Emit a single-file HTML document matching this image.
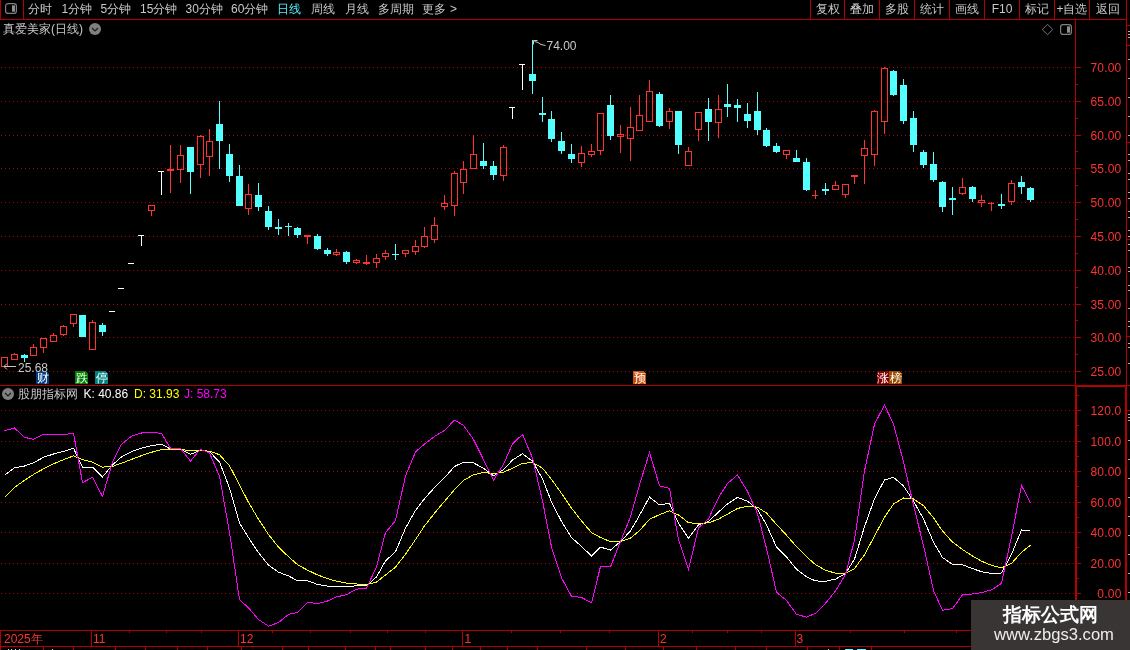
<!DOCTYPE html>
<html><head><meta charset="utf-8"><title>chart</title>
<style>
html,body{margin:0;padding:0;background:#000;overflow:hidden;}
body{width:1130px;height:650px;overflow:hidden;position:relative;font-family:"Liberation Sans",sans-serif;}
svg{position:absolute;left:0;top:0;}
#txt{position:absolute;left:0;top:0;width:1130px;height:650px;will-change:transform;transform:translateZ(0);}
.t{position:absolute;white-space:nowrap;font-family:"Liberation Sans",sans-serif;}
</style></head><body>
<svg width="1130" height="650" viewBox="0 0 1130 650" shape-rendering="crispEdges">
<defs><pattern id="dot" x="1" y="0" width="4" height="1" patternUnits="userSpaceOnUse"><rect x="0" y="0" width="1" height="1" fill="#B40000"/></pattern></defs>
<rect x="0" y="19" width="1127" height="1" fill="#B40000"/>
<rect x="0" y="0" width="1" height="20" fill="#B40000"/>
<rect x="23" y="0" width="1" height="20" fill="#B40000"/>
<rect x="810" y="0" width="1" height="20" fill="#B40000"/>
<rect x="844" y="0" width="1" height="20" fill="#B40000"/>
<rect x="879" y="0" width="1" height="20" fill="#B40000"/>
<rect x="914" y="0" width="1" height="20" fill="#B40000"/>
<rect x="949" y="0" width="1" height="20" fill="#B40000"/>
<rect x="984" y="0" width="1" height="20" fill="#B40000"/>
<rect x="1019" y="0" width="1" height="20" fill="#B40000"/>
<rect x="1054" y="0" width="1" height="20" fill="#B40000"/>
<rect x="1089" y="0" width="1" height="20" fill="#B40000"/>
<rect x="1126" y="0" width="1" height="386" fill="#B40000"/>
<rect x="1075" y="20" width="1" height="366" fill="#B40000"/>
<rect x="0" y="385" width="1127" height="1" fill="#B40000"/>
<rect x="1075" y="385" width="2" height="246" fill="#B40000"/>
<rect x="1125" y="385" width="2" height="246" fill="#B40000"/>
<rect x="1075" y="385" width="52" height="2" fill="#B40000"/>
<rect x="0" y="630" width="1127" height="1" fill="#B40000"/>
<rect x="0" y="646" width="1131" height="1" fill="#B40000"/>
<rect x="1127" y="25" width="3" height="1" fill="#B40000"/>
<rect x="1127" y="45" width="3" height="1" fill="#B40000"/>
<rect x="1127" y="142" width="3" height="1" fill="#B40000"/>
<rect x="1127" y="239" width="3" height="1" fill="#B40000"/>
<rect x="1127" y="336" width="3" height="1" fill="#B40000"/>
<rect x="1127" y="385" width="3" height="1" fill="#B40000"/>
<rect x="1127" y="410" width="3" height="1" fill="#B40000"/>
<rect x="0" y="67" width="1075" height="1" fill="url(#dot)"/>
<rect x="1076" y="67" width="5" height="1" fill="#B40000"/>
<rect x="0" y="101" width="1075" height="1" fill="url(#dot)"/>
<rect x="1076" y="101" width="5" height="1" fill="#B40000"/>
<rect x="0" y="135" width="1075" height="1" fill="url(#dot)"/>
<rect x="1076" y="135" width="5" height="1" fill="#B40000"/>
<rect x="0" y="168" width="1075" height="1" fill="url(#dot)"/>
<rect x="1076" y="168" width="5" height="1" fill="#B40000"/>
<rect x="0" y="202" width="1075" height="1" fill="url(#dot)"/>
<rect x="1076" y="202" width="5" height="1" fill="#B40000"/>
<rect x="0" y="236" width="1075" height="1" fill="url(#dot)"/>
<rect x="1076" y="236" width="5" height="1" fill="#B40000"/>
<rect x="0" y="270" width="1075" height="1" fill="url(#dot)"/>
<rect x="1076" y="270" width="5" height="1" fill="#B40000"/>
<rect x="0" y="304" width="1075" height="1" fill="url(#dot)"/>
<rect x="1076" y="304" width="5" height="1" fill="#B40000"/>
<rect x="0" y="337" width="1075" height="1" fill="url(#dot)"/>
<rect x="1076" y="337" width="5" height="1" fill="#B40000"/>
<rect x="0" y="371" width="1075" height="1" fill="url(#dot)"/>
<rect x="1076" y="371" width="5" height="1" fill="#B40000"/>
<rect x="1076" y="84" width="2" height="1" fill="#B40000"/>
<rect x="1076" y="118" width="2" height="1" fill="#B40000"/>
<rect x="1076" y="151" width="2" height="1" fill="#B40000"/>
<rect x="1076" y="185" width="2" height="1" fill="#B40000"/>
<rect x="1076" y="219" width="2" height="1" fill="#B40000"/>
<rect x="1076" y="253" width="2" height="1" fill="#B40000"/>
<rect x="1076" y="287" width="2" height="1" fill="#B40000"/>
<rect x="1076" y="320" width="2" height="1" fill="#B40000"/>
<rect x="1076" y="354" width="2" height="1" fill="#B40000"/>
<rect x="0" y="410" width="1075" height="1" fill="url(#dot)"/>
<rect x="1077" y="410" width="4" height="1" fill="#B40000"/>
<rect x="0" y="441" width="1075" height="1" fill="url(#dot)"/>
<rect x="1077" y="441" width="4" height="1" fill="#B40000"/>
<rect x="0" y="471" width="1075" height="1" fill="url(#dot)"/>
<rect x="1077" y="471" width="4" height="1" fill="#B40000"/>
<rect x="0" y="502" width="1075" height="1" fill="url(#dot)"/>
<rect x="1077" y="502" width="4" height="1" fill="#B40000"/>
<rect x="0" y="532" width="1075" height="1" fill="url(#dot)"/>
<rect x="1077" y="532" width="4" height="1" fill="#B40000"/>
<rect x="0" y="563" width="1075" height="1" fill="url(#dot)"/>
<rect x="1077" y="563" width="4" height="1" fill="#B40000"/>
<rect x="0" y="593" width="1075" height="1" fill="url(#dot)"/>
<rect x="1077" y="593" width="4" height="1" fill="#B40000"/>
<rect x="1077" y="425" width="2" height="1" fill="#B40000"/>
<rect x="1077" y="456" width="2" height="1" fill="#B40000"/>
<rect x="1077" y="486" width="2" height="1" fill="#B40000"/>
<rect x="1077" y="517" width="2" height="1" fill="#B40000"/>
<rect x="1077" y="547" width="2" height="1" fill="#B40000"/>
<rect x="1077" y="578" width="2" height="1" fill="#B40000"/>
<rect x="1077" y="395" width="2" height="1" fill="#B40000"/>
<rect x="1077" y="608" width="2" height="1" fill="#B40000"/>
<rect x="1077" y="624" width="2" height="1" fill="#B40000"/>
<rect x="91" y="630" width="1" height="17" fill="#B40000"/>
<rect x="238" y="630" width="1" height="17" fill="#B40000"/>
<rect x="462" y="630" width="1" height="17" fill="#B40000"/>
<rect x="658" y="630" width="1" height="17" fill="#B40000"/>
<rect x="795" y="630" width="1" height="17" fill="#B40000"/>
<rect x="129" y="630" width="1" height="3" fill="#B40000"/>
<rect x="166" y="630" width="1" height="3" fill="#B40000"/>
<rect x="201" y="630" width="1" height="3" fill="#B40000"/>
<rect x="272" y="630" width="1" height="3" fill="#B40000"/>
<rect x="310" y="630" width="1" height="3" fill="#B40000"/>
<rect x="350" y="630" width="1" height="3" fill="#B40000"/>
<rect x="387" y="630" width="1" height="3" fill="#B40000"/>
<rect x="425" y="630" width="1" height="3" fill="#B40000"/>
<rect x="511" y="630" width="1" height="3" fill="#B40000"/>
<rect x="560" y="630" width="1" height="3" fill="#B40000"/>
<rect x="609" y="630" width="1" height="3" fill="#B40000"/>
<rect x="692" y="630" width="1" height="3" fill="#B40000"/>
<rect x="727" y="630" width="1" height="3" fill="#B40000"/>
<rect x="761" y="630" width="1" height="3" fill="#B40000"/>
<rect x="850" y="630" width="1" height="3" fill="#B40000"/>
<rect x="904" y="630" width="1" height="3" fill="#B40000"/>
<rect x="956" y="630" width="1" height="3" fill="#B40000"/>
<rect x="43" y="646" width="1" height="4" fill="#B40000"/>
<rect x="73" y="646" width="1" height="4" fill="#B40000"/>
<rect x="115" y="646" width="1" height="4" fill="#B40000"/>
<rect x="145" y="646" width="1" height="4" fill="#B40000"/>
<rect x="177" y="646" width="1" height="4" fill="#B40000"/>
<rect x="207" y="646" width="1" height="4" fill="#B40000"/>
<rect x="241" y="646" width="1" height="4" fill="#B40000"/>
<rect x="282" y="646" width="1" height="4" fill="#B40000"/>
<rect x="308" y="646" width="1" height="4" fill="#B40000"/>
<rect x="345" y="646" width="1" height="4" fill="#B40000"/>
<rect x="375" y="646" width="1" height="4" fill="#B40000"/>
<rect x="390" y="646" width="1" height="4" fill="#B40000"/>
<rect x="425" y="646" width="1" height="4" fill="#B40000"/>
<rect x="452" y="646" width="1" height="4" fill="#B40000"/>
<rect x="480" y="646" width="1" height="4" fill="#B40000"/>
<rect x="507" y="646" width="1" height="4" fill="#B40000"/>
<rect x="537" y="646" width="1" height="4" fill="#B40000"/>
<rect x="586" y="646" width="1" height="4" fill="#B40000"/>
<rect x="625" y="646" width="1" height="4" fill="#B40000"/>
<rect x="663" y="646" width="1" height="4" fill="#B40000"/>
<rect x="696" y="646" width="1" height="4" fill="#B40000"/>
<rect x="735" y="646" width="1" height="4" fill="#B40000"/>
<rect x="766" y="646" width="1" height="4" fill="#B40000"/>
<rect x="807" y="646" width="1" height="4" fill="#B40000"/>
<rect x="839" y="646" width="1" height="4" fill="#B40000"/>
<rect x="871" y="646" width="1" height="4" fill="#B40000"/>
<rect x="0" y="630" width="1" height="20" fill="#B40000"/>
<rect x="8" y="649" width="1" height="1" fill="#D0D0D0"/>
<rect x="11" y="649" width="1" height="1" fill="#D0D0D0"/>
<rect x="15" y="649" width="1" height="1" fill="#D0D0D0"/>
<rect x="19" y="649" width="1" height="1" fill="#D0D0D0"/>
<rect x="52" y="649" width="1" height="1" fill="#D0D0D0"/>
<rect x="828" y="649" width="1" height="1" fill="#D0D0D0"/>
<rect x="845" y="649" width="8" height="1" fill="#54FFFF"/>
<rect x="857" y="649" width="9" height="1" fill="#54FFFF"/>
<rect x="1" y="357" width="7" height="1" fill="#FF3232"/>
<rect x="1" y="366" width="7" height="1" fill="#FF3232"/>
<rect x="1" y="357" width="1" height="10" fill="#FF3232"/>
<rect x="7" y="357" width="1" height="10" fill="#FF3232"/>
<rect x="14" y="353" width="1" height="1" fill="#FF3232"/>
<rect x="11" y="354" width="7" height="1" fill="#FF3232"/>
<rect x="11" y="359" width="7" height="1" fill="#FF3232"/>
<rect x="11" y="354" width="1" height="6" fill="#FF3232"/>
<rect x="17" y="354" width="1" height="6" fill="#FF3232"/>
<rect x="24" y="354" width="1" height="8" fill="#54FFFF"/>
<rect x="21" y="355" width="7" height="3" fill="#54FFFF"/>
<rect x="33" y="344" width="1" height="3" fill="#FF3232"/>
<rect x="30" y="347" width="7" height="1" fill="#FF3232"/>
<rect x="30" y="355" width="7" height="1" fill="#FF3232"/>
<rect x="30" y="347" width="1" height="9" fill="#FF3232"/>
<rect x="36" y="347" width="1" height="9" fill="#FF3232"/>
<rect x="43" y="348" width="1" height="5" fill="#FF3232"/>
<rect x="40" y="338" width="7" height="1" fill="#FF3232"/>
<rect x="40" y="347" width="7" height="1" fill="#FF3232"/>
<rect x="40" y="338" width="1" height="10" fill="#FF3232"/>
<rect x="46" y="338" width="1" height="10" fill="#FF3232"/>
<rect x="53" y="333" width="1" height="2" fill="#FF3232"/>
<rect x="50" y="335" width="7" height="1" fill="#FF3232"/>
<rect x="50" y="341" width="7" height="1" fill="#FF3232"/>
<rect x="50" y="335" width="1" height="7" fill="#FF3232"/>
<rect x="56" y="335" width="1" height="7" fill="#FF3232"/>
<rect x="63" y="325" width="1" height="1" fill="#FF3232"/>
<rect x="63" y="335" width="1" height="1" fill="#FF3232"/>
<rect x="60" y="326" width="7" height="1" fill="#FF3232"/>
<rect x="60" y="334" width="7" height="1" fill="#FF3232"/>
<rect x="60" y="326" width="1" height="9" fill="#FF3232"/>
<rect x="66" y="326" width="1" height="9" fill="#FF3232"/>
<rect x="73" y="324" width="1" height="3" fill="#FF3232"/>
<rect x="70" y="314" width="7" height="1" fill="#FF3232"/>
<rect x="70" y="323" width="7" height="1" fill="#FF3232"/>
<rect x="70" y="314" width="1" height="10" fill="#FF3232"/>
<rect x="76" y="314" width="1" height="10" fill="#FF3232"/>
<rect x="82" y="315" width="1" height="22" fill="#54FFFF"/>
<rect x="79" y="315" width="7" height="22" fill="#54FFFF"/>
<rect x="92" y="320" width="1" height="2" fill="#FF3232"/>
<rect x="89" y="322" width="7" height="1" fill="#FF3232"/>
<rect x="89" y="349" width="7" height="1" fill="#FF3232"/>
<rect x="89" y="322" width="1" height="28" fill="#FF3232"/>
<rect x="95" y="322" width="1" height="28" fill="#FF3232"/>
<rect x="102" y="323" width="1" height="13" fill="#54FFFF"/>
<rect x="99" y="325" width="7" height="7" fill="#54FFFF"/>
<rect x="109" y="311" width="6" height="1" fill="#FFFFFF"/>
<rect x="118" y="288" width="6" height="1" fill="#FFFFFF"/>
<rect x="128" y="263" width="6" height="1" fill="#FFFFFF"/>
<rect x="138" y="235" width="6" height="1" fill="#FFFFFF"/>
<rect x="141" y="235" width="1" height="11" fill="#FFFFFF"/>
<rect x="151" y="211" width="1" height="5" fill="#FF3232"/>
<rect x="148" y="205" width="7" height="1" fill="#FF3232"/>
<rect x="148" y="210" width="7" height="1" fill="#FF3232"/>
<rect x="148" y="205" width="1" height="6" fill="#FF3232"/>
<rect x="154" y="205" width="1" height="6" fill="#FF3232"/>
<rect x="158" y="171" width="6" height="1" fill="#FFFFFF"/>
<rect x="161" y="171" width="1" height="24" fill="#FFFFFF"/>
<rect x="170" y="145" width="1" height="24" fill="#FF3232"/>
<rect x="170" y="171" width="1" height="22" fill="#FF3232"/>
<rect x="167" y="169" width="7" height="2" fill="#FF3232"/>
<rect x="180" y="145" width="1" height="10" fill="#FF3232"/>
<rect x="180" y="170" width="1" height="13" fill="#FF3232"/>
<rect x="177" y="155" width="7" height="1" fill="#FF3232"/>
<rect x="177" y="169" width="7" height="1" fill="#FF3232"/>
<rect x="177" y="155" width="1" height="15" fill="#FF3232"/>
<rect x="183" y="155" width="1" height="15" fill="#FF3232"/>
<rect x="190" y="147" width="1" height="47" fill="#54FFFF"/>
<rect x="187" y="147" width="7" height="25" fill="#54FFFF"/>
<rect x="200" y="135" width="1" height="1" fill="#FF3232"/>
<rect x="200" y="165" width="1" height="13" fill="#FF3232"/>
<rect x="197" y="136" width="7" height="1" fill="#FF3232"/>
<rect x="197" y="164" width="7" height="1" fill="#FF3232"/>
<rect x="197" y="136" width="1" height="29" fill="#FF3232"/>
<rect x="203" y="136" width="1" height="29" fill="#FF3232"/>
<rect x="209" y="129" width="1" height="12" fill="#FF3232"/>
<rect x="209" y="157" width="1" height="19" fill="#FF3232"/>
<rect x="206" y="141" width="7" height="1" fill="#FF3232"/>
<rect x="206" y="156" width="7" height="1" fill="#FF3232"/>
<rect x="206" y="141" width="1" height="16" fill="#FF3232"/>
<rect x="212" y="141" width="1" height="16" fill="#FF3232"/>
<rect x="219" y="101" width="1" height="68" fill="#54FFFF"/>
<rect x="216" y="124" width="7" height="17" fill="#54FFFF"/>
<rect x="229" y="144" width="1" height="38" fill="#54FFFF"/>
<rect x="226" y="154" width="7" height="22" fill="#54FFFF"/>
<rect x="239" y="165" width="1" height="41" fill="#54FFFF"/>
<rect x="236" y="176" width="7" height="30" fill="#54FFFF"/>
<rect x="248" y="184" width="1" height="10" fill="#FF3232"/>
<rect x="248" y="209" width="1" height="6" fill="#FF3232"/>
<rect x="245" y="194" width="7" height="1" fill="#FF3232"/>
<rect x="245" y="208" width="7" height="1" fill="#FF3232"/>
<rect x="245" y="194" width="1" height="15" fill="#FF3232"/>
<rect x="251" y="194" width="1" height="15" fill="#FF3232"/>
<rect x="258" y="183" width="1" height="28" fill="#54FFFF"/>
<rect x="255" y="195" width="7" height="12" fill="#54FFFF"/>
<rect x="268" y="206" width="1" height="24" fill="#54FFFF"/>
<rect x="265" y="211" width="7" height="16" fill="#54FFFF"/>
<rect x="278" y="219" width="1" height="16" fill="#54FFFF"/>
<rect x="275" y="227" width="7" height="2" fill="#54FFFF"/>
<rect x="288" y="223" width="1" height="13" fill="#54FFFF"/>
<rect x="285" y="226" width="7" height="1" fill="#54FFFF"/>
<rect x="297" y="227" width="1" height="11" fill="#54FFFF"/>
<rect x="294" y="228" width="7" height="7" fill="#54FFFF"/>
<rect x="307" y="237" width="1" height="7" fill="#FF3232"/>
<rect x="304" y="235" width="7" height="2" fill="#FF3232"/>
<rect x="317" y="234" width="1" height="16" fill="#54FFFF"/>
<rect x="314" y="236" width="7" height="13" fill="#54FFFF"/>
<rect x="327" y="248" width="1" height="8" fill="#54FFFF"/>
<rect x="324" y="250" width="7" height="4" fill="#54FFFF"/>
<rect x="336" y="249" width="1" height="3" fill="#FF3232"/>
<rect x="336" y="255" width="1" height="1" fill="#FF3232"/>
<rect x="333" y="252" width="7" height="1" fill="#FF3232"/>
<rect x="333" y="254" width="7" height="1" fill="#FF3232"/>
<rect x="333" y="252" width="1" height="3" fill="#FF3232"/>
<rect x="339" y="252" width="1" height="3" fill="#FF3232"/>
<rect x="346" y="251" width="1" height="13" fill="#54FFFF"/>
<rect x="343" y="252" width="7" height="10" fill="#54FFFF"/>
<rect x="356" y="259" width="1" height="1" fill="#FF3232"/>
<rect x="356" y="263" width="1" height="1" fill="#FF3232"/>
<rect x="353" y="260" width="7" height="1" fill="#FF3232"/>
<rect x="353" y="262" width="7" height="1" fill="#FF3232"/>
<rect x="353" y="260" width="1" height="3" fill="#FF3232"/>
<rect x="359" y="260" width="1" height="3" fill="#FF3232"/>
<rect x="366" y="255" width="1" height="7" fill="#FF3232"/>
<rect x="366" y="264" width="1" height="1" fill="#FF3232"/>
<rect x="363" y="262" width="7" height="2" fill="#FF3232"/>
<rect x="376" y="254" width="1" height="4" fill="#FF3232"/>
<rect x="376" y="263" width="1" height="5" fill="#FF3232"/>
<rect x="373" y="258" width="7" height="1" fill="#FF3232"/>
<rect x="373" y="262" width="7" height="1" fill="#FF3232"/>
<rect x="373" y="258" width="1" height="5" fill="#FF3232"/>
<rect x="379" y="258" width="1" height="5" fill="#FF3232"/>
<rect x="385" y="250" width="1" height="3" fill="#FF3232"/>
<rect x="385" y="257" width="1" height="3" fill="#FF3232"/>
<rect x="382" y="253" width="7" height="1" fill="#FF3232"/>
<rect x="382" y="256" width="7" height="1" fill="#FF3232"/>
<rect x="382" y="253" width="1" height="4" fill="#FF3232"/>
<rect x="388" y="253" width="1" height="4" fill="#FF3232"/>
<rect x="395" y="244" width="1" height="16" fill="#54FFFF"/>
<rect x="392" y="254" width="7" height="1" fill="#54FFFF"/>
<rect x="405" y="254" width="1" height="3" fill="#FF3232"/>
<rect x="402" y="250" width="7" height="1" fill="#FF3232"/>
<rect x="402" y="253" width="7" height="1" fill="#FF3232"/>
<rect x="402" y="250" width="1" height="4" fill="#FF3232"/>
<rect x="408" y="250" width="1" height="4" fill="#FF3232"/>
<rect x="415" y="240" width="1" height="6" fill="#FF3232"/>
<rect x="415" y="252" width="1" height="3" fill="#FF3232"/>
<rect x="412" y="246" width="7" height="1" fill="#FF3232"/>
<rect x="412" y="251" width="7" height="1" fill="#FF3232"/>
<rect x="412" y="246" width="1" height="6" fill="#FF3232"/>
<rect x="418" y="246" width="1" height="6" fill="#FF3232"/>
<rect x="424" y="227" width="1" height="9" fill="#FF3232"/>
<rect x="424" y="247" width="1" height="1" fill="#FF3232"/>
<rect x="421" y="236" width="7" height="1" fill="#FF3232"/>
<rect x="421" y="246" width="7" height="1" fill="#FF3232"/>
<rect x="421" y="236" width="1" height="11" fill="#FF3232"/>
<rect x="427" y="236" width="1" height="11" fill="#FF3232"/>
<rect x="434" y="217" width="1" height="8" fill="#FF3232"/>
<rect x="434" y="240" width="1" height="3" fill="#FF3232"/>
<rect x="431" y="225" width="7" height="1" fill="#FF3232"/>
<rect x="431" y="239" width="7" height="1" fill="#FF3232"/>
<rect x="431" y="225" width="1" height="15" fill="#FF3232"/>
<rect x="437" y="225" width="1" height="15" fill="#FF3232"/>
<rect x="444" y="195" width="1" height="8" fill="#FF3232"/>
<rect x="444" y="207" width="1" height="3" fill="#FF3232"/>
<rect x="441" y="203" width="7" height="1" fill="#FF3232"/>
<rect x="441" y="206" width="7" height="1" fill="#FF3232"/>
<rect x="441" y="203" width="1" height="4" fill="#FF3232"/>
<rect x="447" y="203" width="1" height="4" fill="#FF3232"/>
<rect x="454" y="171" width="1" height="2" fill="#FF3232"/>
<rect x="454" y="206" width="1" height="10" fill="#FF3232"/>
<rect x="451" y="173" width="7" height="1" fill="#FF3232"/>
<rect x="451" y="205" width="7" height="1" fill="#FF3232"/>
<rect x="451" y="173" width="1" height="33" fill="#FF3232"/>
<rect x="457" y="173" width="1" height="33" fill="#FF3232"/>
<rect x="463" y="161" width="1" height="8" fill="#FF3232"/>
<rect x="463" y="183" width="1" height="11" fill="#FF3232"/>
<rect x="460" y="169" width="7" height="1" fill="#FF3232"/>
<rect x="460" y="182" width="7" height="1" fill="#FF3232"/>
<rect x="460" y="169" width="1" height="14" fill="#FF3232"/>
<rect x="466" y="169" width="1" height="14" fill="#FF3232"/>
<rect x="473" y="135" width="1" height="19" fill="#FF3232"/>
<rect x="470" y="154" width="7" height="1" fill="#FF3232"/>
<rect x="470" y="168" width="7" height="1" fill="#FF3232"/>
<rect x="470" y="154" width="1" height="15" fill="#FF3232"/>
<rect x="476" y="154" width="1" height="15" fill="#FF3232"/>
<rect x="483" y="143" width="1" height="26" fill="#54FFFF"/>
<rect x="480" y="161" width="7" height="5" fill="#54FFFF"/>
<rect x="493" y="161" width="1" height="19" fill="#54FFFF"/>
<rect x="490" y="166" width="7" height="9" fill="#54FFFF"/>
<rect x="503" y="145" width="1" height="2" fill="#FF3232"/>
<rect x="503" y="176" width="1" height="5" fill="#FF3232"/>
<rect x="500" y="147" width="7" height="1" fill="#FF3232"/>
<rect x="500" y="175" width="7" height="1" fill="#FF3232"/>
<rect x="500" y="147" width="1" height="29" fill="#FF3232"/>
<rect x="506" y="147" width="1" height="29" fill="#FF3232"/>
<rect x="509" y="107" width="6" height="1" fill="#FFFFFF"/>
<rect x="512" y="107" width="1" height="12" fill="#FFFFFF"/>
<rect x="519" y="64" width="6" height="1" fill="#FFFFFF"/>
<rect x="522" y="64" width="1" height="26" fill="#FFFFFF"/>
<rect x="532" y="40" width="1" height="54" fill="#54FFFF"/>
<rect x="529" y="74" width="7" height="7" fill="#54FFFF"/>
<rect x="542" y="97" width="1" height="25" fill="#54FFFF"/>
<rect x="539" y="113" width="7" height="2" fill="#54FFFF"/>
<rect x="551" y="111" width="1" height="31" fill="#54FFFF"/>
<rect x="548" y="119" width="7" height="20" fill="#54FFFF"/>
<rect x="561" y="132" width="1" height="22" fill="#54FFFF"/>
<rect x="558" y="141" width="7" height="10" fill="#54FFFF"/>
<rect x="571" y="144" width="1" height="19" fill="#54FFFF"/>
<rect x="568" y="154" width="7" height="5" fill="#54FFFF"/>
<rect x="581" y="146" width="1" height="7" fill="#FF3232"/>
<rect x="581" y="163" width="1" height="4" fill="#FF3232"/>
<rect x="578" y="153" width="7" height="1" fill="#FF3232"/>
<rect x="578" y="162" width="7" height="1" fill="#FF3232"/>
<rect x="578" y="153" width="1" height="10" fill="#FF3232"/>
<rect x="584" y="153" width="1" height="10" fill="#FF3232"/>
<rect x="591" y="144" width="1" height="7" fill="#FF3232"/>
<rect x="591" y="155" width="1" height="2" fill="#FF3232"/>
<rect x="588" y="151" width="7" height="1" fill="#FF3232"/>
<rect x="588" y="154" width="7" height="1" fill="#FF3232"/>
<rect x="588" y="151" width="1" height="4" fill="#FF3232"/>
<rect x="594" y="151" width="1" height="4" fill="#FF3232"/>
<rect x="600" y="151" width="1" height="4" fill="#FF3232"/>
<rect x="597" y="113" width="7" height="1" fill="#FF3232"/>
<rect x="597" y="150" width="7" height="1" fill="#FF3232"/>
<rect x="597" y="113" width="1" height="38" fill="#FF3232"/>
<rect x="603" y="113" width="1" height="38" fill="#FF3232"/>
<rect x="610" y="95" width="1" height="45" fill="#54FFFF"/>
<rect x="607" y="105" width="7" height="31" fill="#54FFFF"/>
<rect x="620" y="125" width="1" height="9" fill="#FF3232"/>
<rect x="620" y="137" width="1" height="16" fill="#FF3232"/>
<rect x="617" y="134" width="7" height="1" fill="#FF3232"/>
<rect x="617" y="136" width="7" height="1" fill="#FF3232"/>
<rect x="617" y="134" width="1" height="3" fill="#FF3232"/>
<rect x="623" y="134" width="1" height="3" fill="#FF3232"/>
<rect x="630" y="107" width="1" height="20" fill="#FF3232"/>
<rect x="630" y="139" width="1" height="22" fill="#FF3232"/>
<rect x="627" y="127" width="7" height="1" fill="#FF3232"/>
<rect x="627" y="138" width="7" height="1" fill="#FF3232"/>
<rect x="627" y="127" width="1" height="12" fill="#FF3232"/>
<rect x="633" y="127" width="1" height="12" fill="#FF3232"/>
<rect x="639" y="95" width="1" height="20" fill="#FF3232"/>
<rect x="636" y="115" width="7" height="1" fill="#FF3232"/>
<rect x="636" y="130" width="7" height="1" fill="#FF3232"/>
<rect x="636" y="115" width="1" height="16" fill="#FF3232"/>
<rect x="642" y="115" width="1" height="16" fill="#FF3232"/>
<rect x="649" y="80" width="1" height="11" fill="#FF3232"/>
<rect x="646" y="91" width="7" height="1" fill="#FF3232"/>
<rect x="646" y="121" width="7" height="1" fill="#FF3232"/>
<rect x="646" y="91" width="1" height="31" fill="#FF3232"/>
<rect x="652" y="91" width="1" height="31" fill="#FF3232"/>
<rect x="659" y="92" width="1" height="35" fill="#54FFFF"/>
<rect x="656" y="94" width="7" height="32" fill="#54FFFF"/>
<rect x="669" y="108" width="1" height="3" fill="#FF3232"/>
<rect x="669" y="122" width="1" height="7" fill="#FF3232"/>
<rect x="666" y="111" width="7" height="1" fill="#FF3232"/>
<rect x="666" y="121" width="7" height="1" fill="#FF3232"/>
<rect x="666" y="111" width="1" height="11" fill="#FF3232"/>
<rect x="672" y="111" width="1" height="11" fill="#FF3232"/>
<rect x="678" y="111" width="1" height="43" fill="#54FFFF"/>
<rect x="675" y="111" width="7" height="34" fill="#54FFFF"/>
<rect x="688" y="147" width="1" height="4" fill="#FF3232"/>
<rect x="685" y="151" width="7" height="1" fill="#FF3232"/>
<rect x="685" y="165" width="7" height="1" fill="#FF3232"/>
<rect x="685" y="151" width="1" height="15" fill="#FF3232"/>
<rect x="691" y="151" width="1" height="15" fill="#FF3232"/>
<rect x="698" y="130" width="1" height="11" fill="#FF3232"/>
<rect x="695" y="112" width="7" height="1" fill="#FF3232"/>
<rect x="695" y="129" width="7" height="1" fill="#FF3232"/>
<rect x="695" y="112" width="1" height="18" fill="#FF3232"/>
<rect x="701" y="112" width="1" height="18" fill="#FF3232"/>
<rect x="708" y="98" width="1" height="43" fill="#54FFFF"/>
<rect x="705" y="109" width="7" height="13" fill="#54FFFF"/>
<rect x="718" y="95" width="1" height="14" fill="#FF3232"/>
<rect x="718" y="123" width="1" height="15" fill="#FF3232"/>
<rect x="715" y="109" width="7" height="1" fill="#FF3232"/>
<rect x="715" y="122" width="7" height="1" fill="#FF3232"/>
<rect x="715" y="109" width="1" height="14" fill="#FF3232"/>
<rect x="721" y="109" width="1" height="14" fill="#FF3232"/>
<rect x="727" y="84" width="1" height="33" fill="#54FFFF"/>
<rect x="724" y="104" width="7" height="3" fill="#54FFFF"/>
<rect x="737" y="99" width="1" height="23" fill="#54FFFF"/>
<rect x="734" y="105" width="7" height="3" fill="#54FFFF"/>
<rect x="747" y="103" width="1" height="25" fill="#54FFFF"/>
<rect x="744" y="114" width="7" height="7" fill="#54FFFF"/>
<rect x="757" y="92" width="1" height="43" fill="#54FFFF"/>
<rect x="754" y="111" width="7" height="19" fill="#54FFFF"/>
<rect x="766" y="128" width="1" height="19" fill="#54FFFF"/>
<rect x="763" y="130" width="7" height="16" fill="#54FFFF"/>
<rect x="776" y="143" width="1" height="10" fill="#54FFFF"/>
<rect x="773" y="146" width="7" height="6" fill="#54FFFF"/>
<rect x="786" y="155" width="1" height="4" fill="#FF3232"/>
<rect x="783" y="150" width="7" height="1" fill="#FF3232"/>
<rect x="783" y="154" width="7" height="1" fill="#FF3232"/>
<rect x="783" y="150" width="1" height="5" fill="#FF3232"/>
<rect x="789" y="150" width="1" height="5" fill="#FF3232"/>
<rect x="796" y="150" width="1" height="12" fill="#54FFFF"/>
<rect x="793" y="158" width="7" height="4" fill="#54FFFF"/>
<rect x="806" y="158" width="1" height="33" fill="#54FFFF"/>
<rect x="803" y="162" width="7" height="28" fill="#54FFFF"/>
<rect x="815" y="190" width="1" height="5" fill="#FF3232"/>
<rect x="815" y="196" width="1" height="3" fill="#FF3232"/>
<rect x="812" y="195" width="6" height="1" fill="#FF3232"/>
<rect x="825" y="183" width="1" height="12" fill="#54FFFF"/>
<rect x="822" y="189" width="7" height="2" fill="#54FFFF"/>
<rect x="835" y="181" width="1" height="4" fill="#FF3232"/>
<rect x="832" y="185" width="7" height="1" fill="#FF3232"/>
<rect x="832" y="189" width="7" height="1" fill="#FF3232"/>
<rect x="832" y="185" width="1" height="5" fill="#FF3232"/>
<rect x="838" y="185" width="1" height="5" fill="#FF3232"/>
<rect x="845" y="195" width="1" height="3" fill="#FF3232"/>
<rect x="842" y="184" width="7" height="1" fill="#FF3232"/>
<rect x="842" y="194" width="7" height="1" fill="#FF3232"/>
<rect x="842" y="184" width="1" height="11" fill="#FF3232"/>
<rect x="848" y="184" width="1" height="11" fill="#FF3232"/>
<rect x="854" y="177" width="1" height="7" fill="#FF3232"/>
<rect x="851" y="175" width="7" height="2" fill="#FF3232"/>
<rect x="864" y="140" width="1" height="8" fill="#FF3232"/>
<rect x="864" y="156" width="1" height="28" fill="#FF3232"/>
<rect x="861" y="148" width="7" height="1" fill="#FF3232"/>
<rect x="861" y="155" width="7" height="1" fill="#FF3232"/>
<rect x="861" y="148" width="1" height="8" fill="#FF3232"/>
<rect x="867" y="148" width="1" height="8" fill="#FF3232"/>
<rect x="874" y="110" width="1" height="1" fill="#FF3232"/>
<rect x="874" y="155" width="1" height="11" fill="#FF3232"/>
<rect x="871" y="111" width="7" height="1" fill="#FF3232"/>
<rect x="871" y="154" width="7" height="1" fill="#FF3232"/>
<rect x="871" y="111" width="1" height="44" fill="#FF3232"/>
<rect x="877" y="111" width="1" height="44" fill="#FF3232"/>
<rect x="884" y="67" width="1" height="1" fill="#FF3232"/>
<rect x="884" y="122" width="1" height="12" fill="#FF3232"/>
<rect x="881" y="68" width="7" height="1" fill="#FF3232"/>
<rect x="881" y="121" width="7" height="1" fill="#FF3232"/>
<rect x="881" y="68" width="1" height="54" fill="#FF3232"/>
<rect x="887" y="68" width="1" height="54" fill="#FF3232"/>
<rect x="893" y="70" width="1" height="26" fill="#54FFFF"/>
<rect x="890" y="71" width="7" height="24" fill="#54FFFF"/>
<rect x="903" y="79" width="1" height="45" fill="#54FFFF"/>
<rect x="900" y="85" width="7" height="36" fill="#54FFFF"/>
<rect x="913" y="111" width="1" height="41" fill="#54FFFF"/>
<rect x="910" y="118" width="7" height="27" fill="#54FFFF"/>
<rect x="923" y="150" width="1" height="18" fill="#54FFFF"/>
<rect x="920" y="152" width="7" height="13" fill="#54FFFF"/>
<rect x="933" y="152" width="1" height="30" fill="#54FFFF"/>
<rect x="930" y="164" width="7" height="16" fill="#54FFFF"/>
<rect x="942" y="181" width="1" height="31" fill="#54FFFF"/>
<rect x="939" y="182" width="7" height="25" fill="#54FFFF"/>
<rect x="952" y="187" width="1" height="28" fill="#54FFFF"/>
<rect x="949" y="198" width="7" height="2" fill="#54FFFF"/>
<rect x="962" y="178" width="1" height="9" fill="#FF3232"/>
<rect x="962" y="194" width="1" height="1" fill="#FF3232"/>
<rect x="959" y="187" width="7" height="1" fill="#FF3232"/>
<rect x="959" y="193" width="7" height="1" fill="#FF3232"/>
<rect x="959" y="187" width="1" height="7" fill="#FF3232"/>
<rect x="965" y="187" width="1" height="7" fill="#FF3232"/>
<rect x="972" y="186" width="1" height="16" fill="#54FFFF"/>
<rect x="969" y="187" width="7" height="12" fill="#54FFFF"/>
<rect x="981" y="195" width="1" height="5" fill="#FF3232"/>
<rect x="981" y="203" width="1" height="4" fill="#FF3232"/>
<rect x="978" y="200" width="7" height="1" fill="#FF3232"/>
<rect x="978" y="202" width="7" height="1" fill="#FF3232"/>
<rect x="978" y="200" width="1" height="3" fill="#FF3232"/>
<rect x="984" y="200" width="1" height="3" fill="#FF3232"/>
<rect x="991" y="202" width="1" height="1" fill="#FF3232"/>
<rect x="991" y="204" width="1" height="7" fill="#FF3232"/>
<rect x="988" y="203" width="6" height="1" fill="#FF3232"/>
<rect x="1001" y="194" width="1" height="15" fill="#54FFFF"/>
<rect x="998" y="204" width="7" height="2" fill="#54FFFF"/>
<rect x="1011" y="180" width="1" height="3" fill="#FF3232"/>
<rect x="1011" y="202" width="1" height="3" fill="#FF3232"/>
<rect x="1008" y="183" width="7" height="1" fill="#FF3232"/>
<rect x="1008" y="201" width="7" height="1" fill="#FF3232"/>
<rect x="1008" y="183" width="1" height="19" fill="#FF3232"/>
<rect x="1014" y="183" width="1" height="19" fill="#FF3232"/>
<rect x="1021" y="176" width="1" height="18" fill="#54FFFF"/>
<rect x="1018" y="182" width="7" height="5" fill="#54FFFF"/>
<rect x="1030" y="187" width="1" height="15" fill="#54FFFF"/>
<rect x="1027" y="188" width="7" height="12" fill="#54FFFF"/>
<g stroke="#C8C8C8" stroke-width="1" fill="none" shape-rendering="auto"><path d="M534.5 41.5 L538 42.5 L541 44.5 L545.5 45.5"/><path d="M533.5 44.5 L533.5 40.5 L537.5 40.5"/><path d="M4 366.5 H16 M7 363.5 L4 366.5 L7 369.5"/></g>
<path d="M36 371 H46 L49 374 V384 H36 Z" fill="#003C82"/>
<path d="M75 371 H85 L88 374 V384 H75 Z" fill="#008000"/>
<path d="M95 371 H105 L108 374 V384 H95 Z" fill="#008080"/>
<path d="M633 371 H643 L646 374 V384 H633 Z" fill="#C8500A"/>
<rect x="877" y="371" width="12" height="13" fill="#800000"/>
<path d="M889 371 H899 L902 374 V384 H889 Z" fill="#964B00"/>
<polyline points="4.5,475.2 14.5,467.7 24.5,466.0 33.5,462.8 43.5,457.3 53.5,454.0 63.5,451.4 73.5,448.3 82.5,467.4 92.5,467.2 102.5,476.9 112.5,464.9 121.5,456.9 131.5,451.6 141.5,448.1 151.5,445.7 161.5,444.2 170.5,449.1 180.5,449.1 190.5,454.3 200.5,450.2 209.5,451.7 219.5,461.9 229.5,487.9 239.5,523.1 248.5,537.6 258.5,552.6 268.5,565.1 278.5,572.2 288.5,575.9 297.5,580.7 307.5,580.8 317.5,584.4 327.5,586.1 336.5,586.4 346.5,587.0 356.5,585.7 366.5,585.8 376.5,576.9 385.5,560.9 395.5,551.7 405.5,528.1 415.5,510.4 424.5,498.7 434.5,487.6 444.5,477.7 454.5,466.5 463.5,462.2 473.5,462.9 483.5,468.2 493.5,475.8 503.5,469.6 512.5,460.1 522.5,453.7 532.5,461.1 542.5,479.0 551.5,501.9 561.5,521.5 571.5,537.5 581.5,546.4 591.5,556.0 600.5,547.1 610.5,550.1 620.5,541.6 630.5,531.0 639.5,515.3 649.5,497.1 659.5,505.0 669.5,503.3 678.5,523.2 688.5,538.3 698.5,525.0 708.5,521.5 718.5,512.0 727.5,503.9 737.5,497.4 747.5,501.2 757.5,509.4 766.5,524.9 776.5,547.0 786.5,557.0 796.5,569.2 806.5,576.8 815.5,580.9 825.5,581.3 835.5,579.1 845.5,573.7 854.5,559.1 864.5,526.7 874.5,498.7 884.5,479.9 893.5,477.4 903.5,486.0 913.5,501.1 923.5,519.0 933.5,542.1 942.5,557.5 952.5,564.3 962.5,564.7 972.5,568.6 981.5,571.7 991.5,573.5 1001.5,573.0 1011.5,554.4 1021.5,530.0 1030.5,531.1" fill="none" stroke="#FFFFFF" stroke-width="1" shape-rendering="crispEdges"/>
<polyline points="4.5,497.4 14.5,487.5 24.5,480.3 33.5,474.5 43.5,468.8 53.5,463.8 63.5,459.7 73.5,455.9 82.5,459.7 92.5,462.2 102.5,467.1 112.5,466.4 121.5,463.2 131.5,459.4 141.5,455.6 151.5,452.3 161.5,449.6 170.5,449.4 180.5,449.3 190.5,451.0 200.5,450.7 209.5,451.1 219.5,454.7 229.5,465.8 239.5,484.9 248.5,502.4 258.5,519.2 268.5,534.5 278.5,547.1 288.5,556.7 297.5,564.7 307.5,570.1 317.5,574.9 327.5,578.6 336.5,581.2 346.5,583.1 356.5,584.0 366.5,584.6 376.5,582.0 385.5,575.0 395.5,567.2 405.5,554.2 415.5,539.6 424.5,525.9 434.5,513.2 444.5,501.3 454.5,489.7 463.5,480.5 473.5,474.7 483.5,472.5 493.5,473.6 503.5,472.3 512.5,468.2 522.5,463.4 532.5,462.6 542.5,468.1 551.5,479.4 561.5,493.4 571.5,508.1 581.5,520.9 591.5,532.6 600.5,537.5 610.5,541.7 620.5,541.7 630.5,538.1 639.5,530.5 649.5,519.4 659.5,514.6 669.5,510.8 678.5,515.0 688.5,522.7 698.5,523.5 708.5,522.8 718.5,519.2 727.5,514.1 737.5,508.5 747.5,506.1 757.5,507.2 766.5,513.1 776.5,524.4 786.5,535.2 796.5,546.6 806.5,556.6 815.5,564.7 825.5,570.2 835.5,573.2 845.5,573.4 854.5,568.6 864.5,554.7 874.5,536.0 884.5,517.3 893.5,504.0 903.5,498.0 913.5,499.0 923.5,505.7 933.5,517.8 942.5,531.0 952.5,542.1 962.5,549.6 972.5,556.0 981.5,561.2 991.5,565.3 1001.5,567.9 1011.5,563.4 1021.5,552.3 1030.5,545.2" fill="none" stroke="#FFFF00" stroke-width="1" shape-rendering="crispEdges"/>
<polyline points="4.5,430.6 14.5,428.0 24.5,437.3 33.5,439.4 43.5,434.4 53.5,434.2 63.5,434.7 73.5,433.2 82.5,482.7 92.5,477.3 102.5,496.4 112.5,462.0 121.5,444.4 131.5,436.2 141.5,433.0 151.5,432.5 161.5,433.3 170.5,448.4 180.5,448.6 190.5,461.0 200.5,449.2 209.5,453.0 219.5,476.4 229.5,532.3 239.5,599.6 248.5,607.9 258.5,619.5 268.5,626.2 278.5,622.6 288.5,614.4 297.5,612.6 307.5,602.4 317.5,603.6 327.5,601.0 336.5,596.9 346.5,594.7 356.5,589.1 366.5,588.3 376.5,566.7 385.5,532.7 395.5,520.7 405.5,475.9 415.5,451.9 424.5,444.1 434.5,436.4 444.5,430.4 454.5,420.1 463.5,425.4 473.5,439.4 483.5,459.6 493.5,480.2 503.5,464.4 512.5,443.8 522.5,434.4 532.5,458.1 542.5,500.8 551.5,547.0 561.5,577.8 571.5,596.4 581.5,597.4 591.5,602.9 600.5,566.5 610.5,566.9 620.5,541.6 630.5,516.8 639.5,484.9 649.5,452.4 659.5,485.8 669.5,488.4 678.5,539.8 688.5,569.4 698.5,528.0 708.5,518.9 718.5,497.6 727.5,483.5 737.5,475.0 747.5,491.4 757.5,513.7 766.5,548.4 776.5,592.2 786.5,600.5 796.5,614.4 806.5,617.1 815.5,613.3 825.5,603.3 835.5,590.9 845.5,574.5 854.5,540.0 864.5,470.9 874.5,424.2 884.5,405.0 893.5,424.2 903.5,462.0 913.5,505.2 923.5,545.6 933.5,590.6 942.5,610.3 952.5,608.6 962.5,594.8 972.5,594.0 981.5,592.6 991.5,589.9 1001.5,583.3 1011.5,536.5 1021.5,485.5 1030.5,502.9" fill="none" stroke="#FF00FF" stroke-width="1" shape-rendering="crispEdges"/>
<g shape-rendering="auto"><rect x="5.6" y="3.6" width="10.8" height="9.8" rx="2.5" fill="none" stroke="#808080" stroke-width="1.2"/><rect x="12" y="5.4" width="3" height="6.3" fill="#909090"/><rect x="1060.6" y="24.6" width="10.8" height="9.8" rx="2.5" fill="none" stroke="#808080" stroke-width="1.2"/><rect x="1067" y="26.4" width="3" height="6.3" fill="#909090"/><path d="M1047.5 24.3 L1052.7 29.5 L1047.5 34.7 L1042.3 29.5 Z" fill="none" stroke="#808080" stroke-width="0.9"/><circle cx="95" cy="29" r="6" fill="#808080"/><path d="M92 28 L95 31 L98 28" fill="none" stroke="#1a1a1a" stroke-width="1.15"/><circle cx="8" cy="394" r="6" fill="#808080"/><path d="M5 393 L8 396 L11 393" fill="none" stroke="#1a1a1a" stroke-width="1.15"/></g>
<rect x="1128" y="31" width="2" height="1" fill="#B0B0B0"/>
<rect x="1128" y="34" width="2" height="1" fill="#B0B0B0"/>
<rect x="1128" y="37" width="2" height="1" fill="#B0B0B0"/>
<rect x="1128" y="59" width="2" height="1" fill="#B0B0B0"/>
<rect x="1128" y="78" width="2" height="1" fill="#B0B0B0"/>
<rect x="1128" y="97" width="2" height="1" fill="#B0B0B0"/>
<rect x="1128" y="116" width="2" height="1" fill="#B0B0B0"/>
<rect x="1128" y="135" width="2" height="1" fill="#B0B0B0"/>
<rect x="1128" y="154" width="2" height="1" fill="#B0B0B0"/>
<rect x="1128" y="160" width="2" height="1" fill="#B0B0B0"/>
<rect x="1128" y="173" width="2" height="1" fill="#B0B0B0"/>
<rect x="1128" y="179" width="2" height="1" fill="#B0B0B0"/>
<rect x="1128" y="192" width="2" height="1" fill="#B0B0B0"/>
<rect x="1128" y="198" width="2" height="1" fill="#B0B0B0"/>
<rect x="1128" y="211" width="2" height="1" fill="#B0B0B0"/>
<rect x="1128" y="217" width="2" height="1" fill="#B0B0B0"/>
<rect x="1128" y="230" width="2" height="1" fill="#B0B0B0"/>
<rect x="1128" y="236" width="2" height="1" fill="#B0B0B0"/>
<rect x="1128" y="244" width="2" height="1" fill="#B0B0B0"/>
<rect x="1128" y="250" width="2" height="1" fill="#B0B0B0"/>
<rect x="1128" y="267" width="2" height="1" fill="#B0B0B0"/>
<rect x="1128" y="271" width="2" height="1" fill="#B0B0B0"/>
<rect x="1128" y="285" width="2" height="1" fill="#B0B0B0"/>
<rect x="1128" y="290" width="2" height="1" fill="#B0B0B0"/>
<rect x="1128" y="308" width="2" height="1" fill="#B0B0B0"/>
<rect x="1128" y="321" width="2" height="1" fill="#B0B0B0"/>
<rect x="1128" y="326" width="2" height="1" fill="#B0B0B0"/>
<rect x="1128" y="343" width="2" height="1" fill="#B0B0B0"/>
<rect x="1128" y="347" width="2" height="1" fill="#B0B0B0"/>
<rect x="1128" y="363" width="2" height="1" fill="#B0B0B0"/>
<rect x="1128" y="414" width="2" height="1" fill="#B0B0B0"/>
<rect x="1128" y="417" width="2" height="1" fill="#B0B0B0"/>
<rect x="1128" y="420" width="2" height="1" fill="#B0B0B0"/>
<rect x="1128" y="440" width="2" height="1" fill="#B0B0B0"/>
<rect x="1128" y="459" width="2" height="1" fill="#B0B0B0"/>
<rect x="1128" y="478" width="2" height="1" fill="#B0B0B0"/>
<rect x="1128" y="497" width="2" height="1" fill="#B0B0B0"/>
<rect x="1128" y="516" width="2" height="1" fill="#B0B0B0"/>
<rect x="1128" y="535" width="2" height="1" fill="#B0B0B0"/>
<rect x="1128" y="554" width="2" height="1" fill="#B0B0B0"/>
<rect x="1128" y="573" width="2" height="1" fill="#B0B0B0"/>
<rect x="1128" y="592" width="2" height="1" fill="#B0B0B0"/>
</svg>
<div id="txt">
<div class="t" style="left:28px;top:3px;color:#C8C8C8;font-size:12px;line-height:12px;">分时</div>
<div class="t" style="left:61.5px;top:3px;color:#C8C8C8;font-size:12px;line-height:12px;">1分钟</div>
<div class="t" style="left:100.5px;top:3px;color:#C8C8C8;font-size:12px;line-height:12px;">5分钟</div>
<div class="t" style="left:140px;top:3px;color:#C8C8C8;font-size:12px;line-height:12px;">15分钟</div>
<div class="t" style="left:185.5px;top:3px;color:#C8C8C8;font-size:12px;line-height:12px;">30分钟</div>
<div class="t" style="left:231px;top:3px;color:#C8C8C8;font-size:12px;line-height:12px;">60分钟</div>
<div class="t" style="left:277.3px;top:3px;color:#54F0FF;font-size:12px;line-height:12px;">日线</div>
<div class="t" style="left:311.3px;top:3px;color:#C8C8C8;font-size:12px;line-height:12px;">周线</div>
<div class="t" style="left:344.6px;top:3px;color:#C8C8C8;font-size:12px;line-height:12px;">月线</div>
<div class="t" style="left:377.6px;top:3px;color:#C8C8C8;font-size:12px;line-height:12px;">多周期</div>
<div class="t" style="left:421.5px;top:3px;color:#C8C8C8;font-size:12px;line-height:12px;">更多</div>
<div class="t" style="left:450px;top:3px;color:#C8C8C8;font-size:12px;line-height:12px;">&gt;</div>
<div class="t" style="left:811px;top:3px;color:#C8C8C8;font-size:12px;line-height:12px;width:33px;text-align:center;">复权</div>
<div class="t" style="left:845px;top:3px;color:#C8C8C8;font-size:12px;line-height:12px;width:34px;text-align:center;">叠加</div>
<div class="t" style="left:880px;top:3px;color:#C8C8C8;font-size:12px;line-height:12px;width:34px;text-align:center;">多股</div>
<div class="t" style="left:915px;top:3px;color:#C8C8C8;font-size:12px;line-height:12px;width:34px;text-align:center;">统计</div>
<div class="t" style="left:950px;top:3px;color:#C8C8C8;font-size:12px;line-height:12px;width:34px;text-align:center;">画线</div>
<div class="t" style="left:985px;top:3px;color:#C8C8C8;font-size:12px;line-height:12px;width:34px;text-align:center;">F10</div>
<div class="t" style="left:1020px;top:3px;color:#C8C8C8;font-size:12px;line-height:12px;width:34px;text-align:center;">标记</div>
<div class="t" style="left:1055px;top:3px;color:#C8C8C8;font-size:12px;line-height:12px;width:34px;text-align:center;">+自选</div>
<div class="t" style="left:1090px;top:3px;color:#C8C8C8;font-size:12px;line-height:12px;width:36px;text-align:center;">返回</div>
<div class="t" style="left:3px;top:23px;color:#C8C8C8;font-size:12px;line-height:12px;">真爱美家(日线)</div>
<div class="t" style="left:18px;top:388px;color:#C8C8C8;font-size:12px;line-height:12px;">股朋指标网</div>
<div class="t" style="left:83.5px;top:388px;color:#FFFFFF;font-size:12px;line-height:12px;">K: 40.86</div>
<div class="t" style="left:134px;top:388px;color:#FFFF00;font-size:12px;line-height:12px;">D: 31.93</div>
<div class="t" style="left:184px;top:388px;color:#FF00FF;font-size:12px;line-height:12px;">J: 58.73</div>
<div class="t" style="left:546.5px;top:40px;color:#C8C8C8;font-size:12px;line-height:12px;">74.00</div>
<div class="t" style="left:18px;top:362px;color:#C8C8C8;font-size:12px;line-height:12px;">25.68</div>
<div class="t" style="left:1085.5px;top:61.5px;color:#FF3232;font-size:12px;line-height:12px;width:36px;text-align:right;letter-spacing:0.2px;">70.00</div>
<div class="t" style="left:1085.5px;top:95.5px;color:#FF3232;font-size:12px;line-height:12px;width:36px;text-align:right;letter-spacing:0.2px;">65.00</div>
<div class="t" style="left:1085.5px;top:129.5px;color:#FF3232;font-size:12px;line-height:12px;width:36px;text-align:right;letter-spacing:0.2px;">60.00</div>
<div class="t" style="left:1085.5px;top:162.5px;color:#FF3232;font-size:12px;line-height:12px;width:36px;text-align:right;letter-spacing:0.2px;">55.00</div>
<div class="t" style="left:1085.5px;top:196.5px;color:#FF3232;font-size:12px;line-height:12px;width:36px;text-align:right;letter-spacing:0.2px;">50.00</div>
<div class="t" style="left:1085.5px;top:230.5px;color:#FF3232;font-size:12px;line-height:12px;width:36px;text-align:right;letter-spacing:0.2px;">45.00</div>
<div class="t" style="left:1085.5px;top:264.5px;color:#FF3232;font-size:12px;line-height:12px;width:36px;text-align:right;letter-spacing:0.2px;">40.00</div>
<div class="t" style="left:1085.5px;top:298.5px;color:#FF3232;font-size:12px;line-height:12px;width:36px;text-align:right;letter-spacing:0.2px;">35.00</div>
<div class="t" style="left:1085.5px;top:331.5px;color:#FF3232;font-size:12px;line-height:12px;width:36px;text-align:right;letter-spacing:0.2px;">30.00</div>
<div class="t" style="left:1085.5px;top:365.5px;color:#FF3232;font-size:12px;line-height:12px;width:36px;text-align:right;letter-spacing:0.2px;">25.00</div>
<div class="t" style="left:1085.5px;top:404.5px;color:#FF3232;font-size:12px;line-height:12px;width:36px;text-align:right;letter-spacing:0.2px;">120.0</div>
<div class="t" style="left:1085.5px;top:435.5px;color:#FF3232;font-size:12px;line-height:12px;width:36px;text-align:right;letter-spacing:0.2px;">100.0</div>
<div class="t" style="left:1085.5px;top:465.5px;color:#FF3232;font-size:12px;line-height:12px;width:36px;text-align:right;letter-spacing:0.2px;">80.00</div>
<div class="t" style="left:1085.5px;top:496.5px;color:#FF3232;font-size:12px;line-height:12px;width:36px;text-align:right;letter-spacing:0.2px;">60.00</div>
<div class="t" style="left:1085.5px;top:526.5px;color:#FF3232;font-size:12px;line-height:12px;width:36px;text-align:right;letter-spacing:0.2px;">40.00</div>
<div class="t" style="left:1085.5px;top:557.5px;color:#FF3232;font-size:12px;line-height:12px;width:36px;text-align:right;letter-spacing:0.2px;">20.00</div>
<div class="t" style="left:1085.5px;top:587.5px;color:#FF3232;font-size:12px;line-height:12px;width:36px;text-align:right;letter-spacing:0.2px;">0.00</div>
<div class="t" style="left:4px;top:633px;color:#FF3232;font-size:12px;line-height:12px;">2025年</div>
<div class="t" style="left:93px;top:633px;color:#FF3232;font-size:12px;line-height:12px;">11</div>
<div class="t" style="left:240px;top:633px;color:#FF3232;font-size:12px;line-height:12px;">12</div>
<div class="t" style="left:464.5px;top:633px;color:#FF3232;font-size:12px;line-height:12px;">1</div>
<div class="t" style="left:660px;top:633px;color:#FF3232;font-size:12px;line-height:12px;">2</div>
<div class="t" style="left:796.5px;top:633px;color:#FF3232;font-size:12px;line-height:12px;">3</div>
<div class="t" style="left:36.5px;top:371.5px;color:#FFFFFF;font-size:12px;line-height:12px;">财</div>
<div class="t" style="left:75.5px;top:371.5px;color:#FFFFFF;font-size:12px;line-height:12px;">跌</div>
<div class="t" style="left:95.5px;top:371.5px;color:#FFFFFF;font-size:12px;line-height:12px;">停</div>
<div class="t" style="left:633.5px;top:371.5px;color:#FFFFFF;font-size:12px;line-height:12px;">预</div>
<div class="t" style="left:877px;top:371.5px;color:#FFFFFF;font-size:12px;line-height:12px;">涨</div>
<div class="t" style="left:889.5px;top:371.5px;color:#FFFFFF;font-size:12px;line-height:12px;">榜</div>
<div style="position:absolute;left:971px;top:600px;width:159px;height:50px;background:#3A3535;"></div>
<div class="t" style="left:971px;top:606px;color:#FFFFFF;font-size:18.5px;line-height:18.5px;width:159px;text-align:center;font-weight:bold;">指标公式网</div>
<div class="t" style="left:978px;top:627px;color:#EDEDED;font-size:16.6px;line-height:16.6px;width:152px;text-align:center;">www.zbgs3.com</div>
</div>
</body></html>
